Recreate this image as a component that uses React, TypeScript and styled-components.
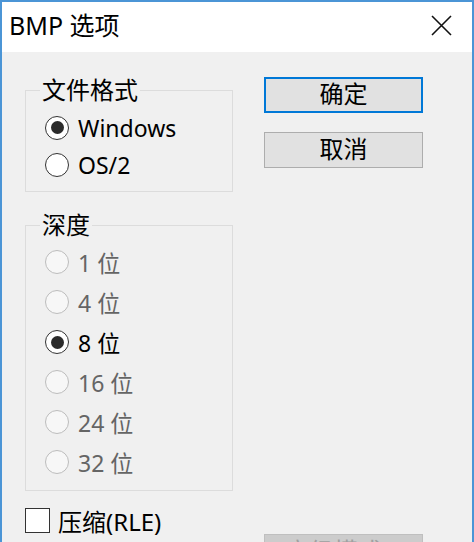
import React, { useState } from 'react';
import styled, { createGlobalStyle } from 'styled-components';

const GlobalStyle = createGlobalStyle`
  html, body {
    margin: 0;
    padding: 0;
    overflow: hidden;
    background: #f0f0f0;
  }
  * {
    box-sizing: border-box;
  }
`;

const FONT = `"Noto Sans", "Noto Sans CJK SC", sans-serif`;

const Window = styled.div`
  width: 474px;
  height: 542px;
  display: flex;
  flex-direction: column;
  border: 2px solid #4b95d6;
  border-bottom: none;
  font-family: ${FONT};
  color: #000;
  overflow: hidden;
`;

const TitleBar = styled.div`
  height: 50px;
  flex-shrink: 0;
  background: #fff;
  display: flex;
  align-items: center;
  justify-content: space-between;
  padding: 0 20px 0 7px;
`;

const Title = styled.div`
  font-size: 25px;
  line-height: 1;
  margin-top: -4px;
`;

const CloseButton = styled.button`
  width: 22px;
  height: 22px;
  padding: 0;
  border: none;
  background: none;
  display: flex;
  align-items: center;
  justify-content: center;
  margin-top: -4px;
`;

const Body = styled.div`
  flex: 1;
  background: #f0f0f0;
  display: flex;
  gap: 31px;
  padding: 24px 0 0 23px;
`;

const LeftColumn = styled.div`
  width: 208px;
  display: flex;
  flex-direction: column;
`;

const RightColumn = styled.div`
  width: 159px;
  display: flex;
  flex-direction: column;
  padding-top: 1px;
`;

const GroupBox = styled.fieldset<{ $gap?: number }>`
  margin: ${(p) => p.$gap ?? 0}px 0 0 0;
  padding: 0;
  border: 1px solid #dcdcdc;
  min-width: 0;
`;

const Legend = styled.legend`
  margin-left: 14px;
  padding: 0 2px;
  font-size: 24px;
  line-height: 28px;
`;

const OptionList = styled.div<{ $top: number }>`
  display: flex;
  flex-direction: column;
  padding: ${(p) => p.$top}px 0 8px 19px;
`;

const Option = styled.label<{ $h: number; $disabled?: boolean }>`
  height: ${(p) => p.$h}px;
  display: flex;
  align-items: center;
  gap: 9px;
  font-size: 23px;
  color: ${(p) => (p.$disabled ? '#656565' : '#000')};
  cursor: ${(p) => (p.$disabled ? 'default' : 'pointer')};
`;

const RadioMark = styled.span<{ $checked?: boolean; $disabled?: boolean }>`
  width: 24px;
  height: 24px;
  flex-shrink: 0;
  border-radius: 50%;
  border: 1.5px solid ${(p) => (p.$disabled ? '#bcbcbc' : '#333')};
  background: ${(p) => (p.$disabled ? '#f7f7f7' : '#fff')};
  display: flex;
  align-items: center;
  justify-content: center;

  &::after {
    content: '';
    display: ${(p) => (p.$checked ? 'block' : 'none')};
    width: 13px;
    height: 13px;
    border-radius: 50%;
    background: #2b2b2b;
  }
`;

const CheckRow = styled.label`
  margin-top: 15px;
  height: 28px;
  display: flex;
  align-items: center;
  gap: 8px;
  font-size: 24px;
  cursor: pointer;
`;

const CheckMark = styled.span`
  width: 25px;
  height: 25px;
  border: 1.5px solid #333;
  background: #fff;
`;

const Button = styled.button<{ $default?: boolean; $gap?: number }>`
  height: 36px;
  width: 100%;
  margin-top: ${(p) => p.$gap ?? 0}px;
  font-family: ${FONT};
  font-size: 24px;
  line-height: 1;
  color: #000;
  background: #e1e1e1;
  border: ${(p) => (p.$default ? '2px solid #0078d7' : '1px solid #adadad')};
  padding: 0 0 3px;
  flex-shrink: 0;

  &:disabled {
    background: #cccccc;
    border-color: #bfbfbf;
    color: #a0a0a0;
  }
`;

const formats = ['Windows', 'OS/2'];
const depths = ['1 位', '4 位', '8 位', '16 位', '24 位', '32 位'];

export default function App() {
  const [format, setFormat] = useState('Windows');
  const depth = '8 位';

  return (
    <>
      <GlobalStyle />
      <Window>
        <TitleBar>
          <Title>BMP 选项</Title>
          <CloseButton aria-label="关闭">
            <svg width="21" height="21" viewBox="0 0 21 21">
              <path d="M1 1 L20 20 M20 1 L1 20" stroke="#111" strokeWidth="1.6" fill="none" />
            </svg>
          </CloseButton>
        </TitleBar>
        <Body>
          <LeftColumn>
            <GroupBox>
              <Legend>文件格式</Legend>
              <OptionList $top={5}>
                {formats.map((f) => (
                  <Option key={f} $h={37} onClick={() => setFormat(f)}>
                    <RadioMark $checked={format === f} />
                    {f}
                  </Option>
                ))}
              </OptionList>
            </GroupBox>
            <GroupBox $gap={19}>
              <Legend>深度</Legend>
              <OptionList $top={3}>
                {depths.map((d) => (
                  <Option key={d} $h={40} $disabled={d !== depth}>
                    <RadioMark $checked={d === depth} $disabled={d !== depth} />
                    {d}
                  </Option>
                ))}
              </OptionList>
            </GroupBox>
            <CheckRow>
              <CheckMark />
              压缩(RLE)
            </CheckRow>
          </LeftColumn>
          <RightColumn>
            <Button $default>确定</Button>
            <Button $gap={19}>取消</Button>
            <Button $gap={366} disabled>
              高级模式...
            </Button>
          </RightColumn>
        </Body>
      </Window>
    </>
  );
}
